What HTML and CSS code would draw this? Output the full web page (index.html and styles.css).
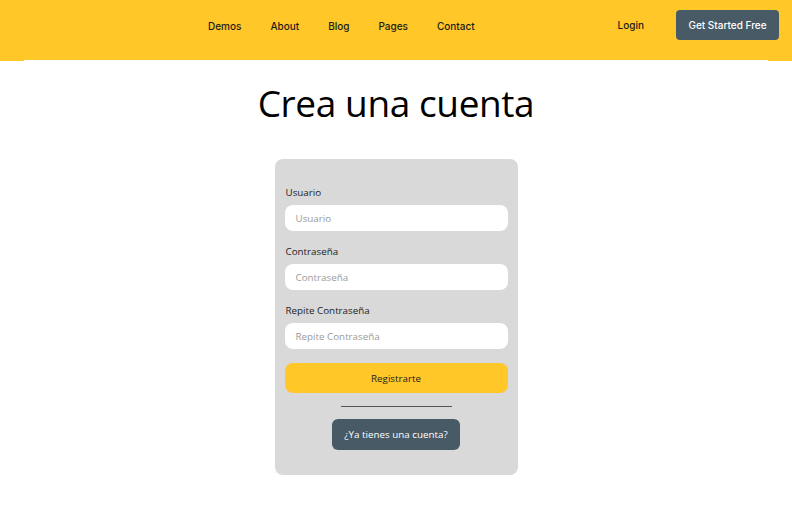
FILE: index.html
```html
<!DOCTYPE html>
<html lang="es">
<head>
<meta charset="utf-8">
<title>Crea una cuenta</title>
<link rel="stylesheet" href="styles.css">
</head>
<body>
<header class="topbar">
  <nav class="nav">
    <a href="#">Demos</a>
    <a href="#">About</a>
    <a href="#">Blog</a>
    <a href="#">Pages</a>
    <a href="#">Contact</a>
  </nav>
  <div class="actions">
    <a href="#" class="login">Login</a>
    <a href="#" class="cta">Get Started Free</a>
  </div>
</header>
<main class="main">
  <h1 class="title">Crea una cuenta</h1>
  <form class="card">
    <label class="label" for="u">Usuario</label>
    <input class="input" id="u" type="text" placeholder="Usuario">
    <label class="label" for="p">Contraseña</label>
    <input class="input" id="p" type="password" placeholder="Contraseña">
    <label class="label" for="r">Repite Contraseña</label>
    <input class="input" id="r" type="password" placeholder="Repite Contraseña">
    <button class="submit" type="button">Registrarte</button>
    <hr class="divider">
    <button class="secondary" type="button">¿Ya tienes una cuenta?</button>
  </form>
</main>
</body>
</html>
```

FILE: styles.css
```css
* { box-sizing: border-box; }
html, body { margin: 0; padding: 0; background: #fff; }
body { font-family: "Open Sans", "Noto Sans", sans-serif; color: #111; }

.topbar {
  height: 61px;
  background: #ffc727;
  display: flex;
  align-items: center;
  padding: 0 13px 11px 208px;
  font-family: "Inter", "DejaVu Sans", sans-serif;
  font-size: 10px;
  font-weight: 500;
}
.topbar a { color: #1c1c1c; text-decoration: none; }
.nav { display: flex; gap: 29px; margin-top: 2px; }
.actions { margin-left: auto; display: flex; align-items: center; gap: 32px; }
.login { margin-left: 1px; }
.cta {
  background: #475a66;
  color: #fff !important;
  border-radius: 4px;
  height: 30px;
  width: 103px;
  display: flex;
  align-items: center;
  justify-content: center;
}

.main {
  margin: -1px 24px 0;
  background: #fff;
  position: relative;
  display: flex;
  flex-direction: column;
  align-items: center;
  padding-top: 16px;
}
.title {
  margin: 0;
  font-weight: 400;
  font-size: 37px;
  letter-spacing: -0.4px;
  line-height: 54px;
  color: #000;
}
.card {
  margin-top: 29px;
  width: 243px;
  background: #d9d9d9;
  border-radius: 8px;
  padding: 26px 10px 25px;
  display: flex;
  flex-direction: column;
  align-items: stretch;
}
.label {
  font-size: 9.8px;
  line-height: 15px;
  color: #222;
  margin-bottom: 5px;
  padding-left: 1px;
}
.input {
  height: 26px;
  border: none;
  border-radius: 8px;
  background: #fff;
  padding: 0 11px;
  font-family: inherit;
  font-size: 9.8px;
  margin-bottom: 13px;
  outline: none;
}
.input::placeholder { color: #9a9a9a; }
.submit {
  margin-top: 1px;
  height: 30px;
  border: none;
  border-radius: 8px;
  background: #ffc727;
  font-family: inherit;
  font-size: 9.8px;
  color: #222;
}
.divider {
  width: 111px;
  border: none;
  border-top: 1px solid #555;
  margin: 13px auto 12px;
}
.secondary {
  align-self: center;
  width: 128px;
  height: 31px;
  border: none;
  border-radius: 6px;
  background: #475a66;
  color: #fff;
  font-family: inherit;
  font-size: 9.8px;
}
```
